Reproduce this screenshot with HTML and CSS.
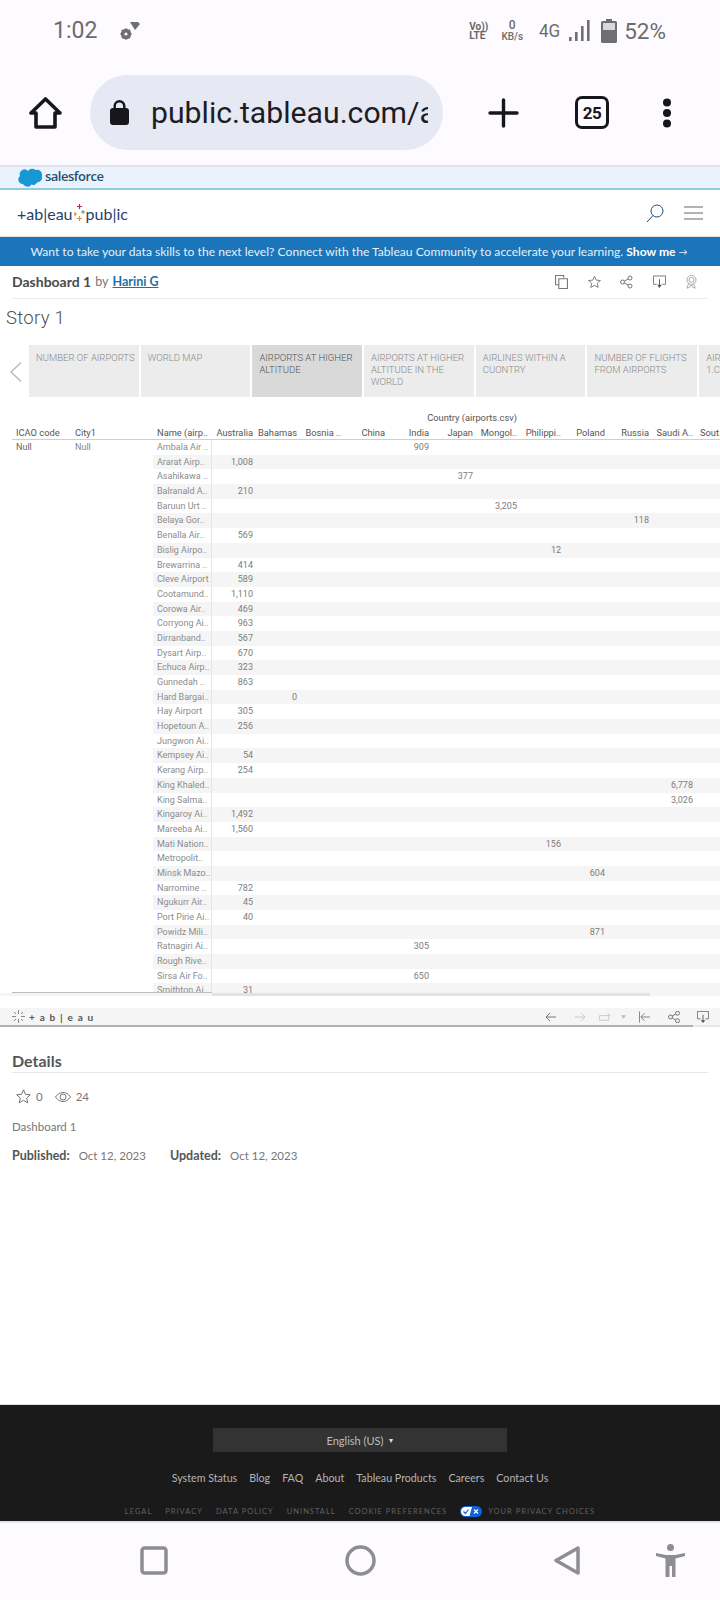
FILE: index.html
```html
<!DOCTYPE html>
<html lang="en">
<head>
<meta charset="utf-8">
<title>Dashboard 1 - Tableau Public</title>
<link rel="stylesheet" href="styles.css">
</head>
<body>
<div class="screen">
  <div class="status">
    <span class="time">1:02</span>
    <svg class="gem" viewBox="0 0 20 18"><path fill="#6f6f6f" d="M10 0h8l2 2-5 6z"/><circle cx="6" cy="12" r="3.7" fill="none" stroke="#6f6f6f" stroke-width="3"/><path stroke="#6f6f6f" stroke-width="2" d="M6 6.500v11M.5 12h11M2 8l8 8M10 8l-8 8"/><circle cx="6" cy="12" r="1.600" fill="#fdfbff"/></svg>
    <span class="spacer"></span>
    <span class="volte"><span>Vo))</span><span>LTE</span></span>
    <span class="speed"><span>0</span><span>KB/s</span></span>
    <span class="net">4G</span>
    <svg class="signal" viewBox="0 0 21 21"><path fill="#6f6f6f" d="M0 17h2.600v4H0zM6 12h2.600v9H6zM12 6h2.600v15H12zM18 0h2.600v21H18z"/></svg>
    <svg class="battery" viewBox="0 0 16 24"><path fill="#6f6f6f" d="M5 0h6v2h3.500a1.500 1.500 0 0 1 1.500 1.500v19a1.500 1.500 0 0 1-1.500 1.500h-13A1.500 1.500 0 0 1 0 22.500v-19A1.500 1.500 0 0 1 1.500 2H5z"/><path fill="#d8d8d8" d="M2 4h12v7H2z"/></svg>
    <span class="pct">52%</span>
  </div>
  <div class="toolbar">
    <svg class="home" viewBox="0 0 35 32"><path fill="none" stroke="#17171b" stroke-width="3.600" stroke-linejoin="round" d="M17.500 2 3 16h5v14h19V16h5z"/></svg>
    <div class="pill">
      <svg class="lock" viewBox="0 0 19 25"><path fill="none" stroke="#17171b" stroke-width="2.400" d="M4.700 10V6a4.800 4.800 0 0 1 9.600 0v4"/><rect y="8" width="19" height="17" rx="3" fill="#17171b"/></svg>
      <span class="url">public.tableau.com/a</span>
    </div>
    <svg class="plus" viewBox="0 0 31 30"><path fill="none" stroke="#17171b" stroke-width="3.400" stroke-linecap="round" d="M15.500 2v26M2 15h27"/></svg>
    <span class="tabs-count">25</span>
    <svg class="dots" viewBox="0 0 10 30"><circle cx="5" cy="4.500" r="4" fill="#17171b"/><circle cx="5" cy="15" r="4" fill="#17171b"/><circle cx="5" cy="25.500" r="4" fill="#17171b"/></svg>
  </div>

  <div class="sf-bar">
    <svg class="cloud" viewBox="0 0 24 20"><path fill="#1798d5" d="M10 3a5 5 0 0 1 7.500-1A5 5 0 0 1 24 7a5.500 5.500 0 0 1-5 7.500 4 4 0 0 1-5.500 2A5 5 0 0 1 5 16 4.500 4.500 0 0 1 2 8a4.800 4.800 0 0 1 8-5z"/></svg>
    <span class="sf-name">salesforce</span>
  </div>

  <div class="tp-head">
    <span class="tp-logo">+ab|eau</span>
    <svg class="tp-mark" viewBox="0 0 11 18"><path stroke="#c72035" stroke-width="1.200" d="M5.500 0v5M3 2.500h5"/><path stroke="#e8762d" stroke-width="1" d="M1 8v4M-1 10h4"/><path stroke="#5b879b" stroke-width="1" d="M9 6v4M7 8h4"/><path stroke="#eb9129" stroke-width="1.200" d="M5.500 12v5M3 14.500h5"/></svg>
    <span class="tp-logo tp-pub">pub|ic</span>
    <span class="spacer"></span>
    <svg class="tp-search" viewBox="0 0 18 18"><circle cx="11" cy="7" r="6" fill="none" stroke="#1f4f7a"/><path stroke="#1f4f7a" d="M7 11.500 1 18"/></svg>
    <svg class="tp-menu" viewBox="0 0 19 14"><path stroke="#666" stroke-width="1.200" d="M0 1h19M0 7h19M0 13h19"/></svg>
  </div>

  <div class="banner">Want to take your data skills to the next level? Connect with the Tableau Community to accelerate your learning.&nbsp;<strong>Show me</strong>&nbsp;<span class="arrow">→</span></div>

  <div class="title-row">
    <div class="title-inner">
      <span class="viz-title">Dashboard 1</span>
      <span class="by">by</span>
      <span class="author">Harini G</span>
      <span class="spacer"></span>
      <span class="actions">
        <svg viewBox="0 0 12 13"><path fill="none" stroke="#777" d="M8 2.500V.5H.5v8.500H3M3.500 3.500h8v9h-8z"/></svg>
        <svg viewBox="0 0 14 14"><path fill="none" stroke="#777" d="m7 .8 1.900 4.200 4.500.4-3.400 3 1 4.500L7 10.600l-4 2.300 1-4.500-3.400-3 4.500-.4z"/></svg>
        <svg viewBox="0 0 13 13"><g fill="none" stroke="#777"><circle cx="2.500" cy="6.500" r="2"/><circle cx="10" cy="2.500" r="2"/><circle cx="10" cy="10.500" r="2"/><path d="m4.300 5.500 4-2M4.300 7.500l4 2"/></g></svg>
        <svg viewBox="0 0 14 14"><path fill="none" stroke="#777" d="M4 9.500H.5v-9h13v9H10"/><path fill="#555" d="M6.500 4h1v6H9.500L7 13.500 4.500 10h2z"/></svg>
        <svg viewBox="0 0 13 17"><g fill="none" stroke="#999"><circle cx="6.500" cy="6" r="5.500"/><circle cx="6.500" cy="6" r="3"/><path d="M3 10.500 1 16l3-1 2-3 2 3 3 1-2-5.500"/></g></svg>
      </span>
    </div>
  </div>

  <div class="story-title">Story 1</div>

  <div class="story-nav">
    <svg class="chev" viewBox="0 0 12 20"><path fill="none" stroke="#b5b5b5" stroke-width="1.300" d="M11 .5 1 10l10 9.500"/></svg>
    <div class="tab">NUMBER OF AIRPORTS</div>
    <div class="tab">WORLD MAP</div>
    <div class="tab tab-on">AIRPORTS AT HIGHER ALTITUDE</div>
    <div class="tab">AIRPORTS AT HIGHER ALTITUDE IN THE WORLD</div>
    <div class="tab">AIRLINES WITHIN A CUONTRY</div>
    <div class="tab">NUMBER OF FLIGHTS FROM AIRPORTS</div>
    <div class="tab tab-end">AIR 1.C</div>
  </div>

  <div class="viz">
    <div class="country-row"><span class="country">Country (airports.csv)</span></div>
    <div class="head-row">
      <span class="h-icao">ICAO code</span>
      <span class="h-city">City1</span>
      <span class="h-name">Name (airp..</span>
      <span class="h">Australia</span><span class="h">Bahamas</span><span class="h">Bosnia ..</span><span class="h">China</span><span class="h">India</span><span class="h">Japan</span><span class="h">Mongol..</span><span class="h">Philippi..</span><span class="h">Poland</span><span class="h">Russia</span><span class="h">Saudi A..</span><span class="h-last">Sout</span>
    </div>
    <div class="viz-body">
      <div class="dims"><span class="d-icao">Null</span><span class="d-city">Null</span></div>
      <div class="rows">
        <div class="row"><span class="n">Ambala Air ..</span><span class="v c5">909</span></div>
        <div class="row"><span class="n">Ararat Airp..</span><span class="v c1">1,008</span></div>
        <div class="row"><span class="n">Asahikawa ..</span><span class="v c6">377</span></div>
        <div class="row"><span class="n">Balranald A..</span><span class="v c1">210</span></div>
        <div class="row"><span class="n">Baruun Urt ..</span><span class="v c7">3,205</span></div>
        <div class="row"><span class="n">Belaya Gor..</span><span class="v c10">118</span></div>
        <div class="row"><span class="n">Benalla Air..</span><span class="v c1">569</span></div>
        <div class="row"><span class="n">Bislig Airpo..</span><span class="v c8">12</span></div>
        <div class="row"><span class="n">Brewarrina ..</span><span class="v c1">414</span></div>
        <div class="row"><span class="n">Cleve Airport</span><span class="v c1">589</span></div>
        <div class="row"><span class="n">Cootamund..</span><span class="v c1">1,110</span></div>
        <div class="row"><span class="n">Corowa Air..</span><span class="v c1">469</span></div>
        <div class="row"><span class="n">Corryong Ai..</span><span class="v c1">963</span></div>
        <div class="row"><span class="n">Dirranband..</span><span class="v c1">567</span></div>
        <div class="row"><span class="n">Dysart Airp..</span><span class="v c1">670</span></div>
        <div class="row"><span class="n">Echuca Airp..</span><span class="v c1">323</span></div>
        <div class="row"><span class="n">Gunnedah ..</span><span class="v c1">863</span></div>
        <div class="row"><span class="n">Hard Bargai..</span><span class="v c2">0</span></div>
        <div class="row"><span class="n">Hay Airport</span><span class="v c1">305</span></div>
        <div class="row"><span class="n">Hopetoun A..</span><span class="v c1">256</span></div>
        <div class="row"><span class="n">Jungwon Ai..</span></div>
        <div class="row"><span class="n">Kempsey Ai..</span><span class="v c1">54</span></div>
        <div class="row"><span class="n">Kerang Airp..</span><span class="v c1">254</span></div>
        <div class="row"><span class="n">King Khaled..</span><span class="v c11">6,778</span></div>
        <div class="row"><span class="n">King Salma..</span><span class="v c11">3,026</span></div>
        <div class="row"><span class="n">Kingaroy Ai..</span><span class="v c1">1,492</span></div>
        <div class="row"><span class="n">Mareeba Ai..</span><span class="v c1">1,560</span></div>
        <div class="row"><span class="n">Mati Nation..</span><span class="v c8">156</span></div>
        <div class="row"><span class="n">Metropolit..</span></div>
        <div class="row"><span class="n">Minsk Mazo..</span><span class="v c9">604</span></div>
        <div class="row"><span class="n">Narromine ..</span><span class="v c1">782</span></div>
        <div class="row"><span class="n">Ngukurr Air..</span><span class="v c1">45</span></div>
        <div class="row"><span class="n">Port Pirie Ai..</span><span class="v c1">40</span></div>
        <div class="row"><span class="n">Powidz Mili..</span><span class="v c9">871</span></div>
        <div class="row"><span class="n">Ratnagiri Ai..</span><span class="v c5">305</span></div>
        <div class="row"><span class="n">Rough Rive..</span></div>
        <div class="row"><span class="n">Sirsa Air Fo..</span><span class="v c5">650</span></div>
        <div class="row"><span class="n">Smithton Ai..</span><span class="v c1">31</span></div>
      </div>
    </div>
    <div class="scroll-row"><span class="scroll-line"></span><span class="scroll-thumb"></span></div>
  </div>

  <div class="viz-toolbar">
    <svg class="t-spark" viewBox="0 0 13 13"><path stroke="#888" d="M6.500 0v4M6.500 9v4M0 6.500h4M9 6.500h4M2 2l2 2M9 9l2 2M11 2 9 4M4 9l-2 2"/></svg>
    <span class="t-word">+ a b | e a u</span>
    <span class="spacer"></span>
    <svg class="t-ic t-back" viewBox="0 0 11 10"><path fill="none" stroke="#777" d="M11 5H1M5 1 1 5l4 4"/></svg>
    <svg class="t-ic t-fwd" viewBox="0 0 11 10"><path fill="none" stroke="#c8c8c8" d="M0 5h10M6 1l4 4-4 4"/></svg>
    <svg class="t-ic t-rep" viewBox="0 0 14 10"><path fill="none" stroke="#c8c8c8" d="M.5 3.500h10v5H.5zM9 .5l3 3H9"/></svg>
    <svg class="t-caret" viewBox="0 0 6 4"><path fill="#bbb" d="M0 0h6L3 4z"/></svg>
    <svg class="t-ic t-first" viewBox="0 0 12 12"><path fill="none" stroke="#777" d="M.5 0v12M12 6H2M6 2 2 6l4 4"/></svg>
    <svg class="t-ic t-share" viewBox="0 0 12 12"><g fill="none" stroke="#777"><circle cx="2.500" cy="6" r="2"/><circle cx="9.500" cy="2.200" r="2"/><circle cx="9.500" cy="9.800" r="2"/><path d="m4.300 5 3.500-2M4.300 7l3.500 2"/></g></svg>
    <svg class="t-ic t-dl" viewBox="0 0 13 13"><path fill="none" stroke="#777" d="M4 8.500H.5v-8h12v8H9"/><path fill="#555" d="M6 4h1v6h2l-2.500 3L4 10h2z"/></svg>
  </div>
  <div class="viz-toolbar-line"></div>

  <div class="details">
    <div class="details-head">Details</div>
    <div class="stats">
      <svg class="st-star" viewBox="0 0 15 15"><path fill="none" stroke="#666" stroke-width=".9" d="m7.500.8 2 4.500 4.800.5-3.600 3.200 1 4.800-4.200-2.500-4.200 2.500 1-4.800L.7 5.800l4.800-.5z"/></svg>
      <span class="st-n">0</span>
      <svg class="st-eye" viewBox="0 0 16 10"><g fill="none" stroke="#666" stroke-width=".9"><path d="M.5 5C3 1.500 5.500.5 8 .5s5 1 7.500 4.500C13 8.500 10.500 9.500 8 9.500S3 8.500.5 5z"/><circle cx="8" cy="5" r="3"/></g></svg>
      <span class="st-n">24</span>
    </div>
    <div class="desc">Dashboard 1</div>
    <div class="dates">
      <strong>Published:</strong><span class="date">Oct 12, 2023</span>
      <strong class="upd">Updated:</strong><span class="date">Oct 12, 2023</span>
    </div>
  </div>

  <div class="footer">
    <div class="lang">English (US)<span class="lang-caret">▾</span></div>
    <div class="links"><span>System Status</span><span>Blog</span><span>FAQ</span><span>About</span><span>Tableau Products</span><span>Careers</span><span>Contact Us</span></div>
    <div class="legal"><span>LEGAL</span><span>PRIVACY</span><span>DATA POLICY</span><span>UNINSTALL</span><span>COOKIE PREFERENCES</span>
      <svg class="toggle" viewBox="0 0 22 11"><rect width="22" height="11" rx="5.500" fill="#0f62d8"/><path fill="#fff" d="M5.500 1H12L9.500 10H5.500a4.500 4.500 0 0 1 0-9z"/><path fill="none" stroke="#0f62d8" stroke-width="1.200" d="m3.500 5.500 2 2 3-4"/><path stroke="#fff" stroke-width="1.100" d="m14 3.500 4 4M18 3.500l-4 4"/></svg>
      <span class="priv">YOUR PRIVACY CHOICES</span></div>
  </div>

  <div class="navbar">
    <svg class="nav-sq" viewBox="0 0 28 29"><rect x="2" y="2" width="24" height="25" rx="2.500" fill="none" stroke="#8e8e8e" stroke-width="3.500"/></svg>
    <svg class="nav-ci" viewBox="0 0 31 31"><circle cx="15.500" cy="15.500" r="13.500" fill="none" stroke="#8e8e8e" stroke-width="3.500"/></svg>
    <svg class="nav-tr" viewBox="0 0 26 29"><path fill="none" stroke="#8e8e8e" stroke-width="3.500" stroke-linejoin="round" d="M24 2 2 14.500 24 27z"/></svg>
    <svg class="nav-ac" viewBox="0 0 29 33"><circle cx="14.500" cy="3.500" r="3.500" fill="#8e8e8e"/><path fill="#8e8e8e" d="M0 9l10 2h9l10-2v3l-9.500 2.500V33H16V22h-2.500v11h-4V14.500L0 12z"/></svg>
  </div>
</div>
</body>
</html>
```

FILE: styles.css
```css
* { box-sizing: border-box; }
html, body { margin: 0; padding: 0; background: #fff; }
body { font-family: "Lato", "Liberation Sans", sans-serif; color: #555; }
svg { display: block; flex: none; }
.screen { width: 720px; height: 1600px; overflow: hidden; display: flex; flex-direction: column; }
.spacer { flex: 1; }

/* phone chrome */
.status { height: 75px; background: #fdfbff; display: flex; align-items: center; padding: 0 54px 14px 53px; color: #6c6c6c; font-family: "Roboto", sans-serif; }
.time { font-size: 23px; width: 67px; }
.gem { width: 20px; height: 18px; }
.volte { display: flex; flex-direction: column; font-size: 10px; line-height: 9px; font-weight: 700; width: 31px; color: #666; }
.speed { display: flex; flex-direction: column; align-items: center; font-size: 10px; line-height: 11px; font-weight: 500; width: 24px; margin-right: 15px; }
.speed span:first-child { font-size: 12px; }
.net { font-size: 18px; width: 30px; transform: scaleX(.95); transform-origin: left; }
.signal { width: 21px; height: 21px; margin-right: 11px; }
.battery { width: 16px; height: 24px; margin-right: 7px; }
.pct { font-size: 22.500px; }
.toolbar { height: 90px; background: #fdfbff; display: flex; align-items: flex-start; padding-left: 28px; }
.home { width: 35px; height: 32px; margin-top: 22px; margin-right: 27px; }
.pill { width: 353px; height: 75px; border-radius: 38px; background: #e6e8f3; display: flex; align-items: center; padding: 0 15px 0 20px; overflow: hidden; margin-right: 45px; }
.lock { width: 19px; height: 25px; margin-right: 22px; }
.url { font-family: "Roboto", sans-serif; font-size: 30.200px; color: #1c1c22; white-space: nowrap; overflow: hidden; }
.plus { width: 31px; height: 30px; margin-top: 23px; margin-right: 56px; }
.tabs-count { width: 34px; height: 33px; margin-top: 21px; margin-right: 53px; border: 3.500px solid #17171b; border-radius: 7px; font-family: "Roboto", sans-serif; font-weight: 700; font-size: 17px; color: #17171b; display: flex; align-items: center; justify-content: center; letter-spacing: -.5px; }
.dots { width: 10px; height: 30px; margin-top: 23px; }

/* site header */
.sf-bar { height: 25px; background: #eaf3fd; border-top: 2px solid #dfe2ea; border-bottom: 2px solid #8fcbe5; display: flex; align-items: center; padding-left: 18px; }
.cloud { width: 24px; height: 20px; margin-right: 3px; }
.sf-name { font-family: "Open Sans", sans-serif; font-size: 13px; font-weight: 600; color: #25506f; letter-spacing: -.5px; line-height: 17px; margin-top: -2px; }
.tp-head { height: 47px; background: #fff; border-bottom: 1px solid #e3e3e3; display: flex; align-items: center; padding: 0 17px; }
.tp-logo { font-family: "Lato", sans-serif; font-size: 16px; color: #1f4368; letter-spacing: 0; }
.tp-mark { width: 11px; height: 18px; margin: 0 1px; }
.tp-search { width: 18px; height: 18px; margin-right: 20px; }
.tp-menu { width: 19px; height: 14px; }
.banner { height: 29px; background: #1b75bb; color: #e5f0f8; font-size: 12.100px; display: flex; align-items: center; justify-content: center; white-space: nowrap; padding-right: 2px; }
.banner strong { color: #fff; font-weight: 700; }
.arrow { font-size: 9px; }
.title-row { height: 33px; padding: 0 12px; background: #fff; }
.title-inner { height: 33px; border-bottom: 1px solid #ececec; display: flex; align-items: center; gap: 4px; font-size: 12.500px; padding-bottom: 1px; }
.viz-title { font-weight: 700; font-size: 14px; color: #4a4a4a; }
.by { color: #777; }
.author { color: #1f6ea8; font-weight: 700; text-decoration: underline; font-size: 12.500px; }
.actions { display: flex; align-items: center; gap: 19.500px; padding-right: 10px; }
.actions svg { width: 13px; height: 14px; }
.story-title { height: 46px; padding: 8px 0 0 6px; font-size: 18.500px; line-height: 22px; color: #4f4f4f; letter-spacing: .3px; font-family: "Roboto", sans-serif; font-weight: 300; }

/* story points */
.story-nav { height: 52px; display: flex; gap: 2px; align-items: stretch; padding-left: 29px; overflow: hidden; position: relative; }
.chev { position: absolute; left: 10px; top: 17px; width: 12px; height: 20px; }
.tab { flex: none; width: 109.700px; background: #ececec; color: #8a8a8a; font-size: 9.500px; font-weight: 300; line-height: 12px; padding: 7px 2px 0 7px; font-family: "Roboto", sans-serif; }
.tab-on { background: #d9d9d9; color: #555; }
.tab-end { width: 21px; padding-right: 0; }

/* crosstab */
.viz { margin-top: 14px; margin-bottom: 12px; font-family: "Roboto", sans-serif; font-size: 9px; flex: none; }
.country-row { height: 15px; display: flex; justify-content: flex-end; padding: 0 203px 2px 0; color: #555; align-items: center; font-size: 9.300px; }
.head-row { height: 14px; margin-left: 12px; display: grid; grid-template-columns: 59px 82px 59px repeat(12, 44px); border-bottom: 1px solid #cfcfcf; color: #555; font-size: 9.300px; white-space: nowrap; line-height: 13px; overflow: hidden; }
.h-icao { padding-left: 4px; }
.h-name { padding-left: 4px; overflow: hidden; }
.h-city { padding-left: 4px; }
.h { text-align: right; padding-right: 3px; overflow: hidden; }
.h-last { padding-left: 4px; }
.viz-body { height: 553px; display: flex; overflow: hidden; }
.dims { width: 153px; flex: none; display: flex; padding-left: 16px; line-height: 14.700px; color: #888; }
.d-icao { width: 59px; color: #666; }
.rows { flex: 1; min-width: 0; }
.row { height: 14.700px; line-height: 14.700px; display: grid; grid-template-columns: 59px repeat(11, 44px) 23px; white-space: nowrap; }
.row:nth-child(even) { background: #f5f5f5; }
.n { grid-column: 1; grid-row: 1; padding-left: 4px; color: #8c8c8c; border-right: 1px solid #e6e6e6; overflow: hidden; }
.v { grid-row: 1; text-align: right; padding-right: 3px; color: #7c7c7c; }
.c1 { grid-column: 2; } .c2 { grid-column: 3; } .c5 { grid-column: 6; } .c6 { grid-column: 7; }
.c7 { grid-column: 8; } .c8 { grid-column: 9; } .c9 { grid-column: 10; } .c10 { grid-column: 11; } .c11 { grid-column: 12; }
.scroll-row { height: 3px; background: #f5f5f5; display: flex; padding-left: 212px; position: relative; }
.scroll-thumb { width: 438px; height: 3px; background: #e2e2e2; }
.scroll-line { position: absolute; left: 12px; top: -1px; width: 200px; height: 1px; background: #bdbdbd; }

/* viz toolbar */
.viz-toolbar { height: 17px; background: #f5f5f5; display: flex; align-items: center; padding: 0 11px 0 12px; flex: none; }
.t-spark { width: 13px; height: 13px; margin-right: 4px; }
.t-word { font-family: "Lato", sans-serif; font-size: 10px; color: #555; letter-spacing: 1.200px; font-weight: 700; }
.t-ic { height: 12px; width: 12px; }
.t-back { width: 11px; margin-right: 19px; }
.t-fwd { width: 11px; margin-right: 13px; }
.t-rep { width: 13px; margin-right: 9px; }
.t-caret { width: 5px; height: 4px; margin-right: 13px; }
.t-first { width: 11px; margin-right: 18px; }
.t-share { margin-right: 17px; }
.viz-toolbar-line { height: 2px; flex: none; background: linear-gradient(to right, #b0b0b0 693px, #e8e8e8 693px); }

/* details */
.details { height: 377px; flex: none; padding: 25px 12px 0; font-family: "Lato", sans-serif; color: #777; }
.details-head { font-size: 16px; font-weight: 700; line-height: 18px; color: #555; height: 20px; border-bottom: 1px solid #e8e8e8; box-sizing: content-box; }
.stats { display: flex; align-items: center; height: 15px; margin-top: 16px; padding-left: 4px; font-size: 11.500px; }
.st-star { width: 15px; height: 15px; margin-right: 5px; }
.st-eye { width: 16px; height: 10px; margin: 0 5px 0 12px; }
.desc { font-size: 11.500px; line-height: 14px; margin-top: 16px; }
.dates { display: flex; font-size: 11.500px; line-height: 14px; margin-top: 15px; }
.dates strong { color: #555; font-weight: 700; font-size: 12.500px; margin-right: 9px; }
.dates .upd { margin-left: 24px; }

/* footer */
.footer { height: 117px; flex: none; background: #1a1a1a; border-top: 1px solid #ddd; font-family: "Lato", sans-serif; display: flex; flex-direction: column; align-items: center; padding-top: 23px; }
.lang { width: 294px; height: 24px; background: #333; color: #bdbdbd; font-size: 11px; display: flex; align-items: center; justify-content: center; }
.lang-caret { font-size: 8px; margin-left: 6px; color: #ddd; }
.links { display: flex; gap: 12px; font-size: 10.700px; color: #b5b5b5; height: 14px; line-height: 14px; margin-top: 19px; }
.legal { display: flex; align-items: center; gap: 13px; font-size: 7.500px; letter-spacing: 1px; color: #616161; height: 11px; margin-top: 21px; }
.toggle { width: 22px; height: 11px; }
.legal .priv { margin-left: -7px; }

/* nav bar */
.navbar { flex: 1; background: #fdfbff; border-top: 2px solid #e5e5e8; display: flex; padding: 23px 0 0 140px; }
.nav-sq { width: 28px; height: 29px; margin-right: 177px; }
.nav-ci { width: 31px; height: 31px; margin-right: 178px; margin-top: -1px; }
.nav-tr { width: 26px; height: 29px; margin-right: 76px; }
.nav-ac { width: 29px; height: 33px; margin-top: -2px; }
```
